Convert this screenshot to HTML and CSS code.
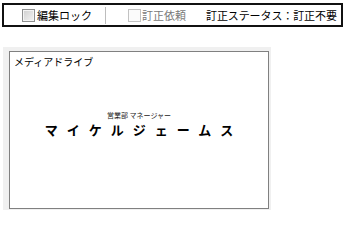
FILE: index.html
```html
<!DOCTYPE html>
<html lang="ja">
<head>
<meta charset="utf-8">
<link rel="stylesheet" href="styles.css">
</head>
<body>
<div class="toolbar">
  <span class="check"></span>
  <span class="label">編集ロック</span>
  <span class="sep"></span>
  <span class="check disabled"></span>
  <span class="label muted">訂正依頼</span>
  <span class="label status">訂正ステータス：訂正不要</span>
</div>
<div class="panel">
  <div class="card">
    <div class="title">メディアドライブ</div>
    <div class="body">
      <div class="role">営業部 マネージャー</div>
      <div class="name">マイケルジェームス</div>
    </div>
  </div>
</div>
</body>
</html>
```
FILE: styles.css
```css
html, body {
  margin: 0;
  padding: 0;
  background: #ffffff;
}
body {
  width: 346px;
  height: 210px;
  overflow: hidden;
  font-family: "Noto Sans CJK JP", "Noto Sans", sans-serif;
  color: #000;
}
.toolbar {
  box-sizing: border-box;
  margin: 3px 3px 0 2px;
  height: 24px;
  border: 2px solid #111;
  display: flex;
  align-items: center;
  font-size: 11px;
  line-height: 13px;
}
.check {
  box-sizing: border-box;
  width: 13px;
  height: 13px;
  margin-left: 18px;
  border: 1px solid #8e8f8f;
  background: linear-gradient(135deg, #cfcfcf 0%, #f4f4f4 100%);
  box-shadow: inset 0 0 0 1px #f4f4f4;
}
.check.disabled {
  margin-left: 22px;
  border-color: #c2c2c2;
  background: #fbfbfb;
  box-shadow: none;
}
.label {
  margin-left: 2px;
  white-space: nowrap;
}
.muted {
  color: #787878;
  margin-left: 1px;
}
.status {
  margin-left: 20px;
  letter-spacing: -0.1px;
}
.sep {
  width: 1px;
  height: 17px;
  background: #bdbdbd;
  margin-left: 13px;
}
.panel {
  margin: 20px 0 0 3px;
  width: 268px;
  height: 163px;
  box-sizing: border-box;
  background: #f0f0f0;
  padding: 4px 2px 0 6px;
}
.card {
  box-sizing: border-box;
  width: 260px;
  height: 158px;
  border: 1px solid #808080;
  background: #fff;
  display: flex;
  flex-direction: column;
}
.title {
  font-size: 10px;
  line-height: 13px;
  padding: 3px 0 0 4px;
}
.body {
  margin-top: 42px;
  display: flex;
  flex-direction: column;
  align-items: center;
}
.role {
  font-size: 7px;
  line-height: 10px;
  color: #222;
}
.name {
  margin-top: 2px;
  font-size: 13px;
  line-height: 16px;
  font-weight: bold;
  letter-spacing: 9px;
  padding-left: 9px;
}
```
